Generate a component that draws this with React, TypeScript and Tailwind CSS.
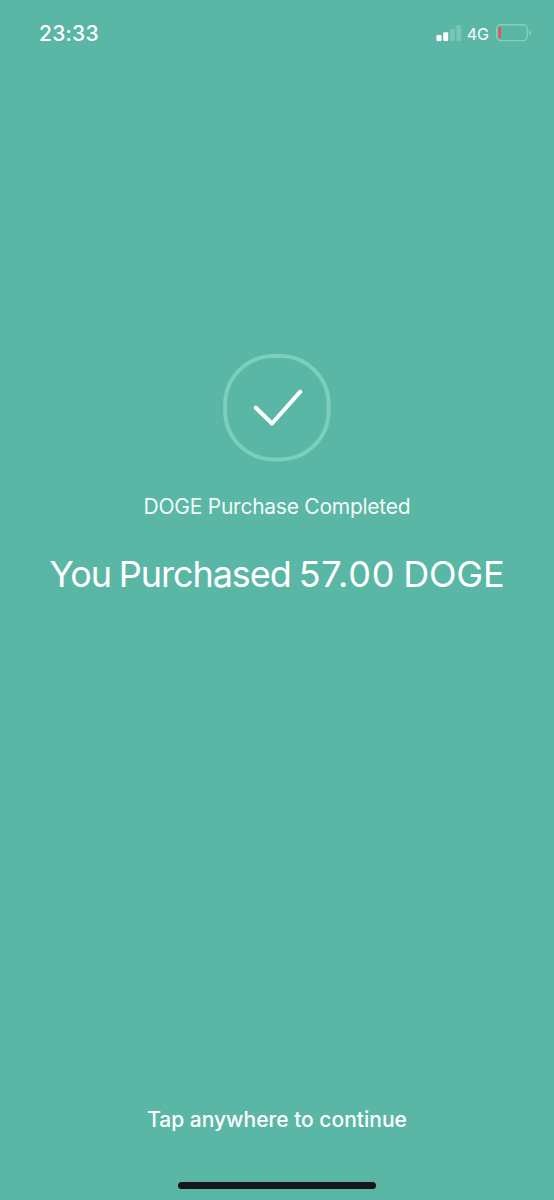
function StatusBar() {
  return (
    <header className="flex h-[66px] items-center justify-between pr-[22px] pl-[39px]">
      <span className="text-[21px] leading-none font-medium tracking-[0.2px]">23:33</span>
      <div className="flex items-center">
        <svg width="26" height="17" viewBox="0 0 26 17" className="mr-[5px]" fill="white">
          <rect x="0.5" y="10" width="5" height="6" rx="1.2" />
          <rect x="7.2" y="7.3" width="5" height="8.7" rx="1.2" />
          <rect x="13.8" y="4" width="5" height="12" rx="1.2" opacity="0.2" />
          <rect x="20.3" y="0" width="5" height="16" rx="1.2" opacity="0.2" />
        </svg>
        <span className="mt-px mr-[7px] text-[16px] leading-none">4G</span>
        <svg width="36" height="18" viewBox="0 0 36 18">
          <rect x="0.8" y="0.8" width="30.4" height="15.8" rx="4" fill="none" stroke="#8bcdbf" strokeWidth="1.4" />
          <rect x="2.2" y="3" width="2.8" height="11.5" rx="1" fill="#e4574f" />
          <path d="M33 6.2c2.3 1 2.3 4 0 5z" fill="#8bcdbf" />
        </svg>
      </div>
    </header>
  );
}

export default function App() {
  return (
    <div className="flex h-[1200px] w-[554px] flex-col overflow-hidden bg-[#5ab7a5] font-['Inter',sans-serif] text-white">
      <StatusBar />
      <main className="flex flex-1 flex-col items-center pt-[288px]">
        <svg width="108" height="108" viewBox="0 0 108 108" fill="none">
          <rect x="2.2" y="2" width="103.4" height="103.4" rx="48.5" stroke="#7ccebd" strokeWidth="4" />
          <path d="M32.8 53.7L49 69.5L77.3 37.7" stroke="white" strokeWidth="4" strokeLinecap="round" strokeLinejoin="round" />
        </svg>
        <p className="mt-[31px] text-[21px] leading-7 tracking-[-0.25px] whitespace-nowrap text-white/95">DOGE Purchase Completed</p>
        <h1 className="mt-[29px] text-[36px] leading-[48px] tracking-[-1.05px] [word-spacing:-1.2px] whitespace-nowrap">
          You Purchased <span className="tracking-[0.8px]">57.00</span> <span className="tracking-[-0.2px]">DOGE</span>
        </h1>
      </main>
      <footer className="flex h-[94px] flex-col items-center justify-between pb-[11px]">
        <p className="text-[21px] leading-7 font-medium whitespace-nowrap">Tap anywhere to continue</p>
        <div className="h-[7px] w-[198px] rounded-full bg-[#151718]" />
      </footer>
    </div>
  );
}
